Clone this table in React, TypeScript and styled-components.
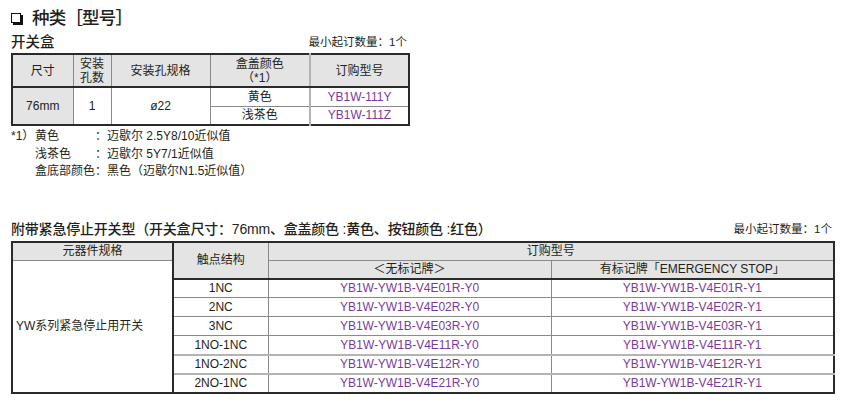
import React from "react";
import styled, { createGlobalStyle } from "styled-components";

const Global = createGlobalStyle`
  body {
    margin: 0;
    background: #fff;
    font-family: "Liberation Sans", "Noto Sans CJK SC", sans-serif;
    color: #231f20;
  }
`;

const Page = styled.div`
  width: 822px;
  padding: 8px 10px 0 11px;
`;

const Title = styled.h1`
  margin: 0;
  display: flex;
  align-items: center;
  gap: 10px;
  font-size: 17.5px;
  line-height: 20px;
  font-weight: 500;
  letter-spacing: -0.8px;
`;

const BoxMark = styled.span`
  display: inline-block;
  width: 8px;
  height: 8px;
  border: 1.5px solid #111;
  box-shadow: 2px 2px 0 #111;
  margin-right: 1px;
`;

const SubHead = styled.div<{ $width: number; $mt: number }>`
  width: ${(p) => p.$width}px;
  margin-top: ${(p) => p.$mt}px;
  display: flex;
  justify-content: space-between;
  align-items: flex-end;
  line-height: 16px;
`;

const SubTitle = styled.h2<{ $tight?: boolean }>`
  margin: 0;
  font-size: ${(p) => (p.$tight ? "14px" : "14.5px")};
  letter-spacing: ${(p) => (p.$tight ? "-0.2px" : "0")};
  font-weight: 500;
`;

const MinQty = styled.span`
  font-size: 11.5px;
  padding-right: 1px;
`;

const Table = styled.table<{ $width: number; $mt: number }>`
  width: ${(p) => p.$width}px;
  margin-top: ${(p) => p.$mt}px;
  border-collapse: collapse;
  table-layout: fixed;
  border: 2px solid #2a2a2a;
  font-size: 12px;
`;

const Row = styled.tr<{ $h: number }>`
  height: ${(p) => p.$h}px;
`;

type Line = "thin" | "dark" | "light";

const lineCss = (l?: Line) =>
  l === "dark"
    ? "2px solid #2a2a2a"
    : l === "light"
    ? "2px solid #b4b4b4"
    : "1px solid #8a8a8a";

const Cell = styled.td<{
  $gray?: boolean;
  $left?: boolean;
  $code?: boolean;
  $b?: Line;
  $r?: Line;
}>`
  padding: 0 0 0 ${(p) => (p.$left ? "3px" : "0")};
  text-align: ${(p) => (p.$left ? "left" : "center")};
  vertical-align: middle;
  line-height: 14px;
  background: ${(p) => (p.$gray ? "#e4e4e4" : "#fff")};
  color: ${(p) => (p.$code ? "#7a3a9c" : "#231f20")};
  font-weight: normal;
  border-bottom: ${(p) => lineCss(p.$b)};
  border-right: ${(p) => lineCss(p.$r)};
  white-space: nowrap;
  overflow: hidden;
`;

const Notes = styled.div`
  margin-top: 2px;
  display: grid;
  grid-template-columns: 24px 60px auto;
  font-size: 12px;
  line-height: 17.5px;
`;

const NoteText = styled.span`
  white-space: nowrap;
`;

const codes = [
  ["1NC", "01"],
  ["2NC", "02"],
  ["3NC", "03"],
  ["1NO-1NC", "11"],
  ["1NO-2NC", "12"],
  ["2NO-1NC", "21"],
];

export default function App() {
  return (
    <>
      <Global />
      <Page>
        <Title>
          <BoxMark />
          种类［型号］
        </Title>

        <SubHead $width={397} $mt={6}>
          <SubTitle>开关盒</SubTitle>
          <MinQty>最小起订数量：1个</MinQty>
        </SubHead>

        <Table $width={397} $mt={3}>
          <colgroup>
            <col style={{ width: 61 }} />
            <col style={{ width: 38 }} />
            <col style={{ width: 99 }} />
            <col style={{ width: 100 }} />
            <col style={{ width: 99 }} />
          </colgroup>
          <tbody>
            <Row $h={33}>
              <Cell as="th" $gray $b="dark">尺寸</Cell>
              <Cell as="th" $gray $b="dark">
                安装
                <br />
                孔数
              </Cell>
              <Cell as="th" $gray $b="dark">安装孔规格</Cell>
              <Cell as="th" $gray $b="dark" $r="light">
                盒盖颜色
                <br />
                （*1）
              </Cell>
              <Cell as="th" $gray $b="dark">订购型号</Cell>
            </Row>
            <Row $h={19}>
              <Cell rowSpan={2} $gray>76mm</Cell>
              <Cell rowSpan={2}>1</Cell>
              <Cell rowSpan={2}>ø22</Cell>
              <Cell $r="light">黄色</Cell>
              <Cell $code>YB1W-111Y</Cell>
            </Row>
            <Row $h={19}>
              <Cell $r="light">浅茶色</Cell>
              <Cell $code>YB1W-111Z</Cell>
            </Row>
          </tbody>
        </Table>

        <Notes>
          <NoteText>*1）</NoteText>
          <NoteText>黄色</NoteText>
          <NoteText>：迈歇尔 2.5Y8/10近似值</NoteText>
          <NoteText />
          <NoteText>浅茶色</NoteText>
          <NoteText>：迈歇尔 5Y7/1近似值</NoteText>
          <NoteText />
          <NoteText>盒底部颜色</NoteText>
          <NoteText>：黑色（迈歇尔N1.5近似值）</NoteText>
        </Notes>

        <SubHead $width={822} $mt={40}>
          <SubTitle $tight>
            附带紧急停止开关型（开关盒尺寸：76mm、盒盖颜色 :黄色、按钮颜色 :红色）
          </SubTitle>
          <MinQty>最小起订数量：1个</MinQty>
        </SubHead>

        <Table $width={822} $mt={4}>
          <colgroup>
            <col style={{ width: 161 }} />
            <col style={{ width: 95 }} />
            <col style={{ width: 283 }} />
            <col style={{ width: 283 }} />
          </colgroup>
          <tbody>
            <Row $h={19}>
              <Cell as="th" $gray $r="dark">元器件规格</Cell>
              <Cell as="th" rowSpan={2} $gray $b="dark">触点结构</Cell>
              <Cell as="th" colSpan={2} $gray>订购型号</Cell>
            </Row>
            <Row $h={18}>
              <Cell rowSpan={7} $left $r="dark">YW系列紧急停止用开关</Cell>
              <Cell as="th" $gray $b="dark">＜无标记牌＞</Cell>
              <Cell as="th" $gray $b="dark">有标记牌「EMERGENCY STOP」</Cell>
            </Row>
            {codes.map(([contact, n], i) => {
              const b: Line = i === 3 || i === 4 ? "light" : "thin";
              return (
                <Row $h={19} key={contact}>
                  <Cell $b={b}>{contact}</Cell>
                  <Cell $code $b={b}>YB1W-YW1B-V4E{n}R-Y0</Cell>
                  <Cell $code $b={b}>YB1W-YW1B-V4E{n}R-Y1</Cell>
                </Row>
              );
            })}
          </tbody>
        </Table>
      </Page>
    </>
  );
}
